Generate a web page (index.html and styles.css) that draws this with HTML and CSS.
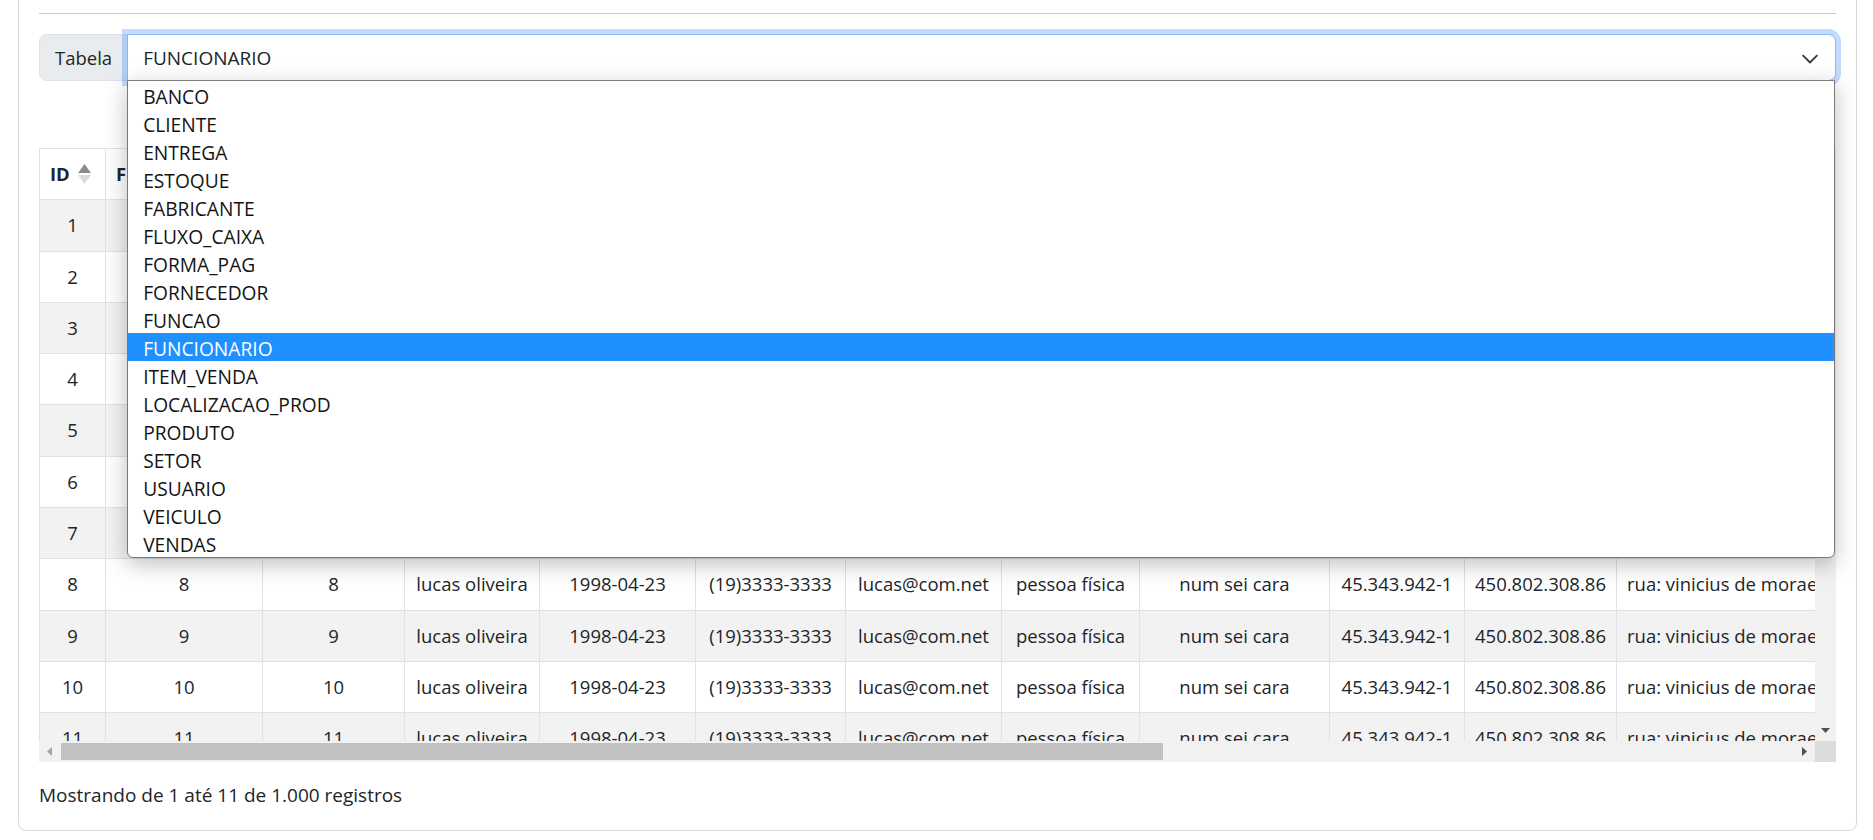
FILE: index.html
```html
<!DOCTYPE html>
<html lang="pt-BR">
<head>
<meta charset="utf-8">
<title>Tabelas</title>
<link rel="stylesheet" href="styles.css">
</head>
<body>
<div class="card">
  <div class="card-body">
    <hr class="rule">
    <div class="input-group">
      <span class="ig-label">Tabela</span>
      <div class="select">
        <span class="select-value">FUNCIONARIO</span>
        <svg class="chev" width="20" height="15" viewBox="0 0 16 12"><path d="m2.5 4.5 5.5 5.5 5.5-5.5" fill="none" stroke="#343a40" stroke-width="1.5" stroke-linecap="round" stroke-linejoin="round"/></svg>
        <ul class="popup">
          <li>BANCO</li>
          <li>CLIENTE</li>
          <li>ENTREGA</li>
          <li>ESTOQUE</li>
          <li>FABRICANTE</li>
          <li>FLUXO_CAIXA</li>
          <li>FORMA_PAG</li>
          <li>FORNECEDOR</li>
          <li>FUNCAO</li>
          <li class="sel">FUNCIONARIO</li>
          <li>ITEM_VENDA</li>
          <li>LOCALIZACAO_PROD</li>
          <li>PRODUTO</li>
          <li>SETOR</li>
          <li>USUARIO</li>
          <li>VEICULO</li>
          <li>VENDAS</li>
        </ul>
      </div>
    </div>

    <div class="scroller">
      <div class="viewport">
        <table class="grid">
          <colgroup>
            <col class="w1"><col class="w2"><col class="w3"><col class="w4"><col class="w5"><col class="w6">
            <col class="w7"><col class="w8"><col class="w9"><col class="w10"><col class="w11"><col class="w12">
          </colgroup>
          <thead>
            <tr>
              <th><div class="th-in"><span>ID</span><svg class="sort" width="13" height="20" viewBox="0 0 13 20"><polygon points="6.5,0 13,9 0,9" fill="#898b8d"/><polygon points="0,11 13,11 6.5,20" fill="#d9dadb"/></svg></div></th>
              <th><div class="th-in"><span>FUNCAO_ID</span></div></th>
              <th><div class="th-in"><span>SETOR_ID</span></div></th>
              <th><div class="th-in"><span>NOME</span></div></th>
              <th><div class="th-in"><span>DATA_NASC</span></div></th>
              <th><div class="th-in"><span>TELEFONE</span></div></th>
              <th><div class="th-in"><span>EMAIL</span></div></th>
              <th><div class="th-in"><span>TIPO</span></div></th>
              <th><div class="th-in"><span>OBSERVACAO</span></div></th>
              <th><div class="th-in"><span>RG</span></div></th>
              <th><div class="th-in"><span>CPF</span></div></th>
              <th><div class="th-in"><span>ENDERECO</span></div></th>
            </tr>
          </thead>
          <tbody>
            <tr><td>1</td><td>1</td><td>1</td><td>lucas oliveira</td><td>1998-04-23</td><td>(19)3333-3333</td><td>lucas@com.net</td><td>pessoa física</td><td>num sei cara</td><td>45.343.942-1</td><td>450.802.308.86</td><td class="left">rua: vinicius de moraes, 123</td></tr>
            <tr><td>2</td><td>2</td><td>2</td><td>lucas oliveira</td><td>1998-04-23</td><td>(19)3333-3333</td><td>lucas@com.net</td><td>pessoa física</td><td>num sei cara</td><td>45.343.942-1</td><td>450.802.308.86</td><td class="left">rua: vinicius de moraes, 123</td></tr>
            <tr><td>3</td><td>3</td><td>3</td><td>lucas oliveira</td><td>1998-04-23</td><td>(19)3333-3333</td><td>lucas@com.net</td><td>pessoa física</td><td>num sei cara</td><td>45.343.942-1</td><td>450.802.308.86</td><td class="left">rua: vinicius de moraes, 123</td></tr>
            <tr><td>4</td><td>4</td><td>4</td><td>lucas oliveira</td><td>1998-04-23</td><td>(19)3333-3333</td><td>lucas@com.net</td><td>pessoa física</td><td>num sei cara</td><td>45.343.942-1</td><td>450.802.308.86</td><td class="left">rua: vinicius de moraes, 123</td></tr>
            <tr><td>5</td><td>5</td><td>5</td><td>lucas oliveira</td><td>1998-04-23</td><td>(19)3333-3333</td><td>lucas@com.net</td><td>pessoa física</td><td>num sei cara</td><td>45.343.942-1</td><td>450.802.308.86</td><td class="left">rua: vinicius de moraes, 123</td></tr>
            <tr><td>6</td><td>6</td><td>6</td><td>lucas oliveira</td><td>1998-04-23</td><td>(19)3333-3333</td><td>lucas@com.net</td><td>pessoa física</td><td>num sei cara</td><td>45.343.942-1</td><td>450.802.308.86</td><td class="left">rua: vinicius de moraes, 123</td></tr>
            <tr><td>7</td><td>7</td><td>7</td><td>lucas oliveira</td><td>1998-04-23</td><td>(19)3333-3333</td><td>lucas@com.net</td><td>pessoa física</td><td>num sei cara</td><td>45.343.942-1</td><td>450.802.308.86</td><td class="left">rua: vinicius de moraes, 123</td></tr>
            <tr><td>8</td><td>8</td><td>8</td><td>lucas oliveira</td><td>1998-04-23</td><td>(19)3333-3333</td><td>lucas@com.net</td><td>pessoa física</td><td>num sei cara</td><td>45.343.942-1</td><td>450.802.308.86</td><td class="left">rua: vinicius de moraes, 123</td></tr>
            <tr><td>9</td><td>9</td><td>9</td><td>lucas oliveira</td><td>1998-04-23</td><td>(19)3333-3333</td><td>lucas@com.net</td><td>pessoa física</td><td>num sei cara</td><td>45.343.942-1</td><td>450.802.308.86</td><td class="left">rua: vinicius de moraes, 123</td></tr>
            <tr><td>10</td><td>10</td><td>10</td><td>lucas oliveira</td><td>1998-04-23</td><td>(19)3333-3333</td><td>lucas@com.net</td><td>pessoa física</td><td>num sei cara</td><td>45.343.942-1</td><td>450.802.308.86</td><td class="left">rua: vinicius de moraes, 123</td></tr>
            <tr><td>11</td><td>11</td><td>11</td><td>lucas oliveira</td><td>1998-04-23</td><td>(19)3333-3333</td><td>lucas@com.net</td><td>pessoa física</td><td>num sei cara</td><td>45.343.942-1</td><td>450.802.308.86</td><td class="left">rua: vinicius de moraes, 123</td></tr>
          </tbody>
        </table>
      </div>
      <div class="vbar">
        <div class="sb-btn"><svg width="9" height="5" viewBox="0 0 9 5"><polygon points="4.5,0 9,5 0,5" fill="#a3a3a3"/></svg></div>
        <div class="vthumb"></div>
        <div class="sb-fill"></div>
        <div class="sb-btn"><svg width="9" height="5" viewBox="0 0 9 5"><polygon points="0,0 9,0 4.5,5" fill="#505050"/></svg></div>
      </div>
      <div class="hbar">
        <div class="sb-btn"><svg width="5" height="9" viewBox="0 0 5 9"><polygon points="5,0 5,9 0,4.5" fill="#a3a3a3"/></svg></div>
        <div class="hthumb"></div>
        <div class="sb-fill"></div>
        <div class="sb-btn"><svg width="5" height="9" viewBox="0 0 5 9"><polygon points="0,0 5,4.5 0,9" fill="#505050"/></svg></div>
      </div>
      <div class="corner"></div>
    </div>

    <div class="info">Mostrando de 1 até 11 de 1.000 registros</div>
  </div>
</div>
</body>
</html>
```

FILE: styles.css
```css
* { box-sizing: border-box; }
html, body { margin: 0; padding: 0; background: #fff; }
body {
  font-family: "Open Sans", "Noto Sans", sans-serif;
  font-size: 18.5px;
  color: #212529;
  overflow: hidden;
}

.card {
  margin: -8px 16px 0 18px;
  border: 1px solid #dadbdc;
  border-radius: 8px;
  background: #fff;
}
.card-body { padding: 20px; }

.rule {
  border: 0;
  border-top: 1px solid #c8c9ca;
  height: 0;
  margin: 0 0 20px;
}

/* input group */
.input-group {
  display: flex;
  height: 47px;
  position: relative;
  z-index: 5;
}
.ig-label {
  display: flex;
  align-items: center;
  padding: 0 15px;
  background: #e9ecef;
  border: 1px solid #dee2e6;
  border-radius: 7.5px 0 0 7.5px;
  color: #212529;
}
.select {
  flex: 1;
  position: relative;
  margin-left: -1px;
  display: flex;
  align-items: center;
  justify-content: space-between;
  padding: 0 15px 0 15px;
  background: #fff;
  border: 1px solid #86b7fe;
  border-radius: 0 7.5px 7.5px 0;
  box-shadow: 0 0 0 5px rgba(13, 110, 253, .25);
  font-size: 19px;
}
.chev { display: block; }

.popup {
  position: absolute;
  top: 100%;
  left: -1px;
  right: 0;
  margin: 0;
  padding: 0;
  list-style: none;
  background: #fff;
  border: 1px solid #7a7a7a;
  border-radius: 0 0 6px 6px;
  box-shadow: 0 6px 22px rgba(0, 0, 0, .26);
  z-index: 10;
}
.popup li {
  height: 28px;
  line-height: 28px;
  padding: 2px 0 0 15px;
  color: #141414;
  white-space: nowrap;
  font-size: 19.2px;
}
.popup li.sel {
  background: #1e90ff;
  color: #fff;
}

/* scrolling table area */
.scroller {
  margin-top: 67px;
  display: grid;
  grid-template-columns: 1fr 21px;
  grid-template-rows: 593px 21px;
}
.viewport { overflow: hidden; }

.grid {
  border-collapse: separate;
  border-spacing: 0;
  table-layout: fixed;
  width: 1878px;
  border-top: 1px solid #dee2e6;
  border-left: 1px solid #dee2e6;
}
.w1 { width: 66px; }
.w2 { width: 157px; }
.w3 { width: 142px; }
.w4 { width: 135px; }
.w5 { width: 156px; }
.w6 { width: 150px; }
.w7 { width: 156px; }
.w8 { width: 138px; }
.w9 { width: 190px; }
.w10 { width: 135px; }
.w11 { width: 152px; }
.w12 { width: 300px; }

.grid th, .grid td {
  padding: 10px;
  line-height: 30.3px;
  border-right: 1px solid #dee2e6;
  border-bottom: 1px solid #dee2e6;
  white-space: nowrap;
  overflow: hidden;
}
.grid th {
  text-align: left;
  font-weight: 700;
  background: #fff;
  padding-right: 14px;
}
.th-in {
  display: flex;
  align-items: center;
  justify-content: space-between;
}
.sort { display: block; }
.grid td { text-align: center; }
.grid td.left { text-align: left; }
.grid tbody tr:nth-child(odd) td { background: #f2f2f2; }

/* fake classic scrollbars */
.vbar {
  background: #f1f1f1;
  display: flex;
  flex-direction: column;
}
.hbar {
  background: #f1f1f1;
  display: flex;
}
.sb-btn {
  width: 21px;
  height: 21px;
  flex: none;
  display: flex;
  align-items: center;
  justify-content: center;
}
.sb-btn svg { display: block; }
.sb-fill { flex: 1; }
.vthumb {
  flex: none;
  height: 20px;
  margin: 0 2px;
  background: #c1c1c1;
}
.hthumb {
  flex: none;
  width: 1102px;
  margin: 2px 0 2px 1px;
  background: #c1c1c1;
}
.corner { background: #dcdcdc; }

.info {
  margin-top: 18px;
  line-height: 30px;
  font-size: 19px;
}
```
